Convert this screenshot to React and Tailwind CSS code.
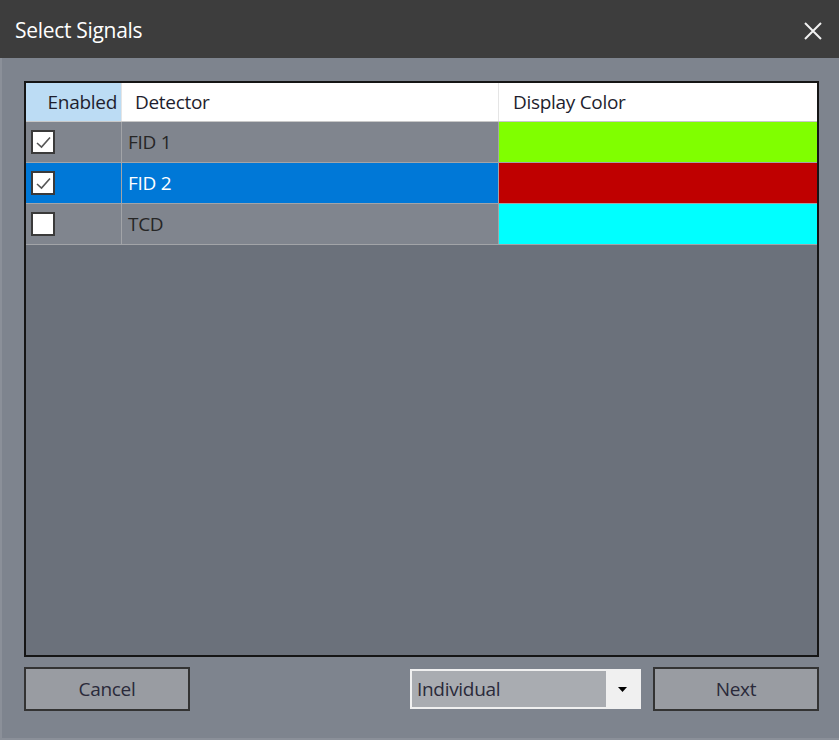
import { useState } from 'react';

const signals = [
  { name: 'FID 1', enabled: true, color: '#80ff00' },
  { name: 'FID 2', enabled: true, color: '#bf0000', selected: true },
  { name: 'TCD', enabled: false, color: '#00ffff' },
];

function CheckBox({ checked }) {
  return (
    <div className="flex h-[24px] w-[24px] items-center justify-center border-2 border-[#3a3a3a] bg-white">
      {checked && (
        <svg width="17" height="15" viewBox="0 0 17 15" fill="none">
          <path d="M2 8 L6.5 12 L15 2.5" stroke="#555" strokeWidth="1.6" />
        </svg>
      )}
    </div>
  );
}

export default function App() {
  const [rows] = useState(signals);

  return (
    <div
      className="flex h-[740px] w-[839px] flex-col bg-[#7e848e]"
      style={{ fontFamily: '"Open Sans", "Noto Sans", sans-serif' }}
    >
      {/* title bar */}
      <div className="flex h-[58px] items-center justify-between bg-[#3d3d3d] pl-[15px] pr-[16px] pt-[3px]">
        <span className="text-[21px] tracking-[-0.3px] text-white">Select Signals</span>
        <svg width="20" height="20" viewBox="0 0 20 20">
          <path d="M2 2 L18 18 M18 2 L2 18" stroke="#f2f2f2" strokeWidth="2" />
        </svg>
      </div>

      <div className="flex flex-1 flex-col border-b-2 border-l-2 border-[#8b9099] pl-[22px] pt-[23px]">
        {/* grid */}
        <div className="flex h-[576px] w-[795px] flex-col border-2 border-[#151515] bg-[#6b717b]">
          <div className="flex h-[39px] border-b border-[#c8c8c8] bg-white text-[19px] tracking-[-0.3px] text-[#1e1e2e]">
            <div className="flex w-[96px] items-center justify-end border-r border-[#e5e5e5] bg-[#bcdcf4] pr-[4px]">
              Enabled
            </div>
            <div className="flex w-[377px] items-center border-r border-[#e5e5e5] pl-[13px]">Detector</div>
            <div className="flex flex-1 items-center pl-[14px]">Display Color</div>
          </div>
          {rows.map((r) => (
            <div
              key={r.name}
              className={
                'flex h-[41px] border-b border-[#a2a4a8] text-[19px] tracking-[-0.3px] ' +
                (r.selected ? 'bg-[#0078d7] text-white' : 'bg-[#80858e] text-[#262626]')
              }
            >
              <div className="flex w-[96px] items-center border-r border-[#a2a4a8] pl-[5px]">
                <CheckBox checked={r.enabled} />
              </div>
              <div className="flex w-[377px] items-center border-r border-[#a2a4a8] pl-[6px]">{r.name}</div>
              <div className="flex-1" style={{ backgroundColor: r.color }} />
            </div>
          ))}
        </div>

        {/* buttons */}
        <div className="mt-[10px] flex w-[795px] items-center text-[19px] tracking-[-0.3px] text-[#2a2a3a]">
          <button className="h-[44px] w-[166px] border-2 border-[#333] bg-[#999ca2]">Cancel</button>
          <div className="ml-auto flex h-[40px] w-[231px] border-2 border-[#f0f0f0] bg-[#a9acb1]">
            <span className="flex flex-1 items-center pl-[5px]">Individual</span>
            <span className="flex w-[33px] items-center justify-center bg-[#f0f0f0]">
              <svg width="9" height="5" viewBox="0 0 9 5">
                <path d="M0 0 H9 L4.5 5 Z" fill="#000" />
              </svg>
            </span>
          </div>
          <button className="ml-[12px] h-[44px] w-[166px] border-2 border-[#333] bg-[#999ca2]">Next</button>
        </div>
      </div>
    </div>
  );
}
